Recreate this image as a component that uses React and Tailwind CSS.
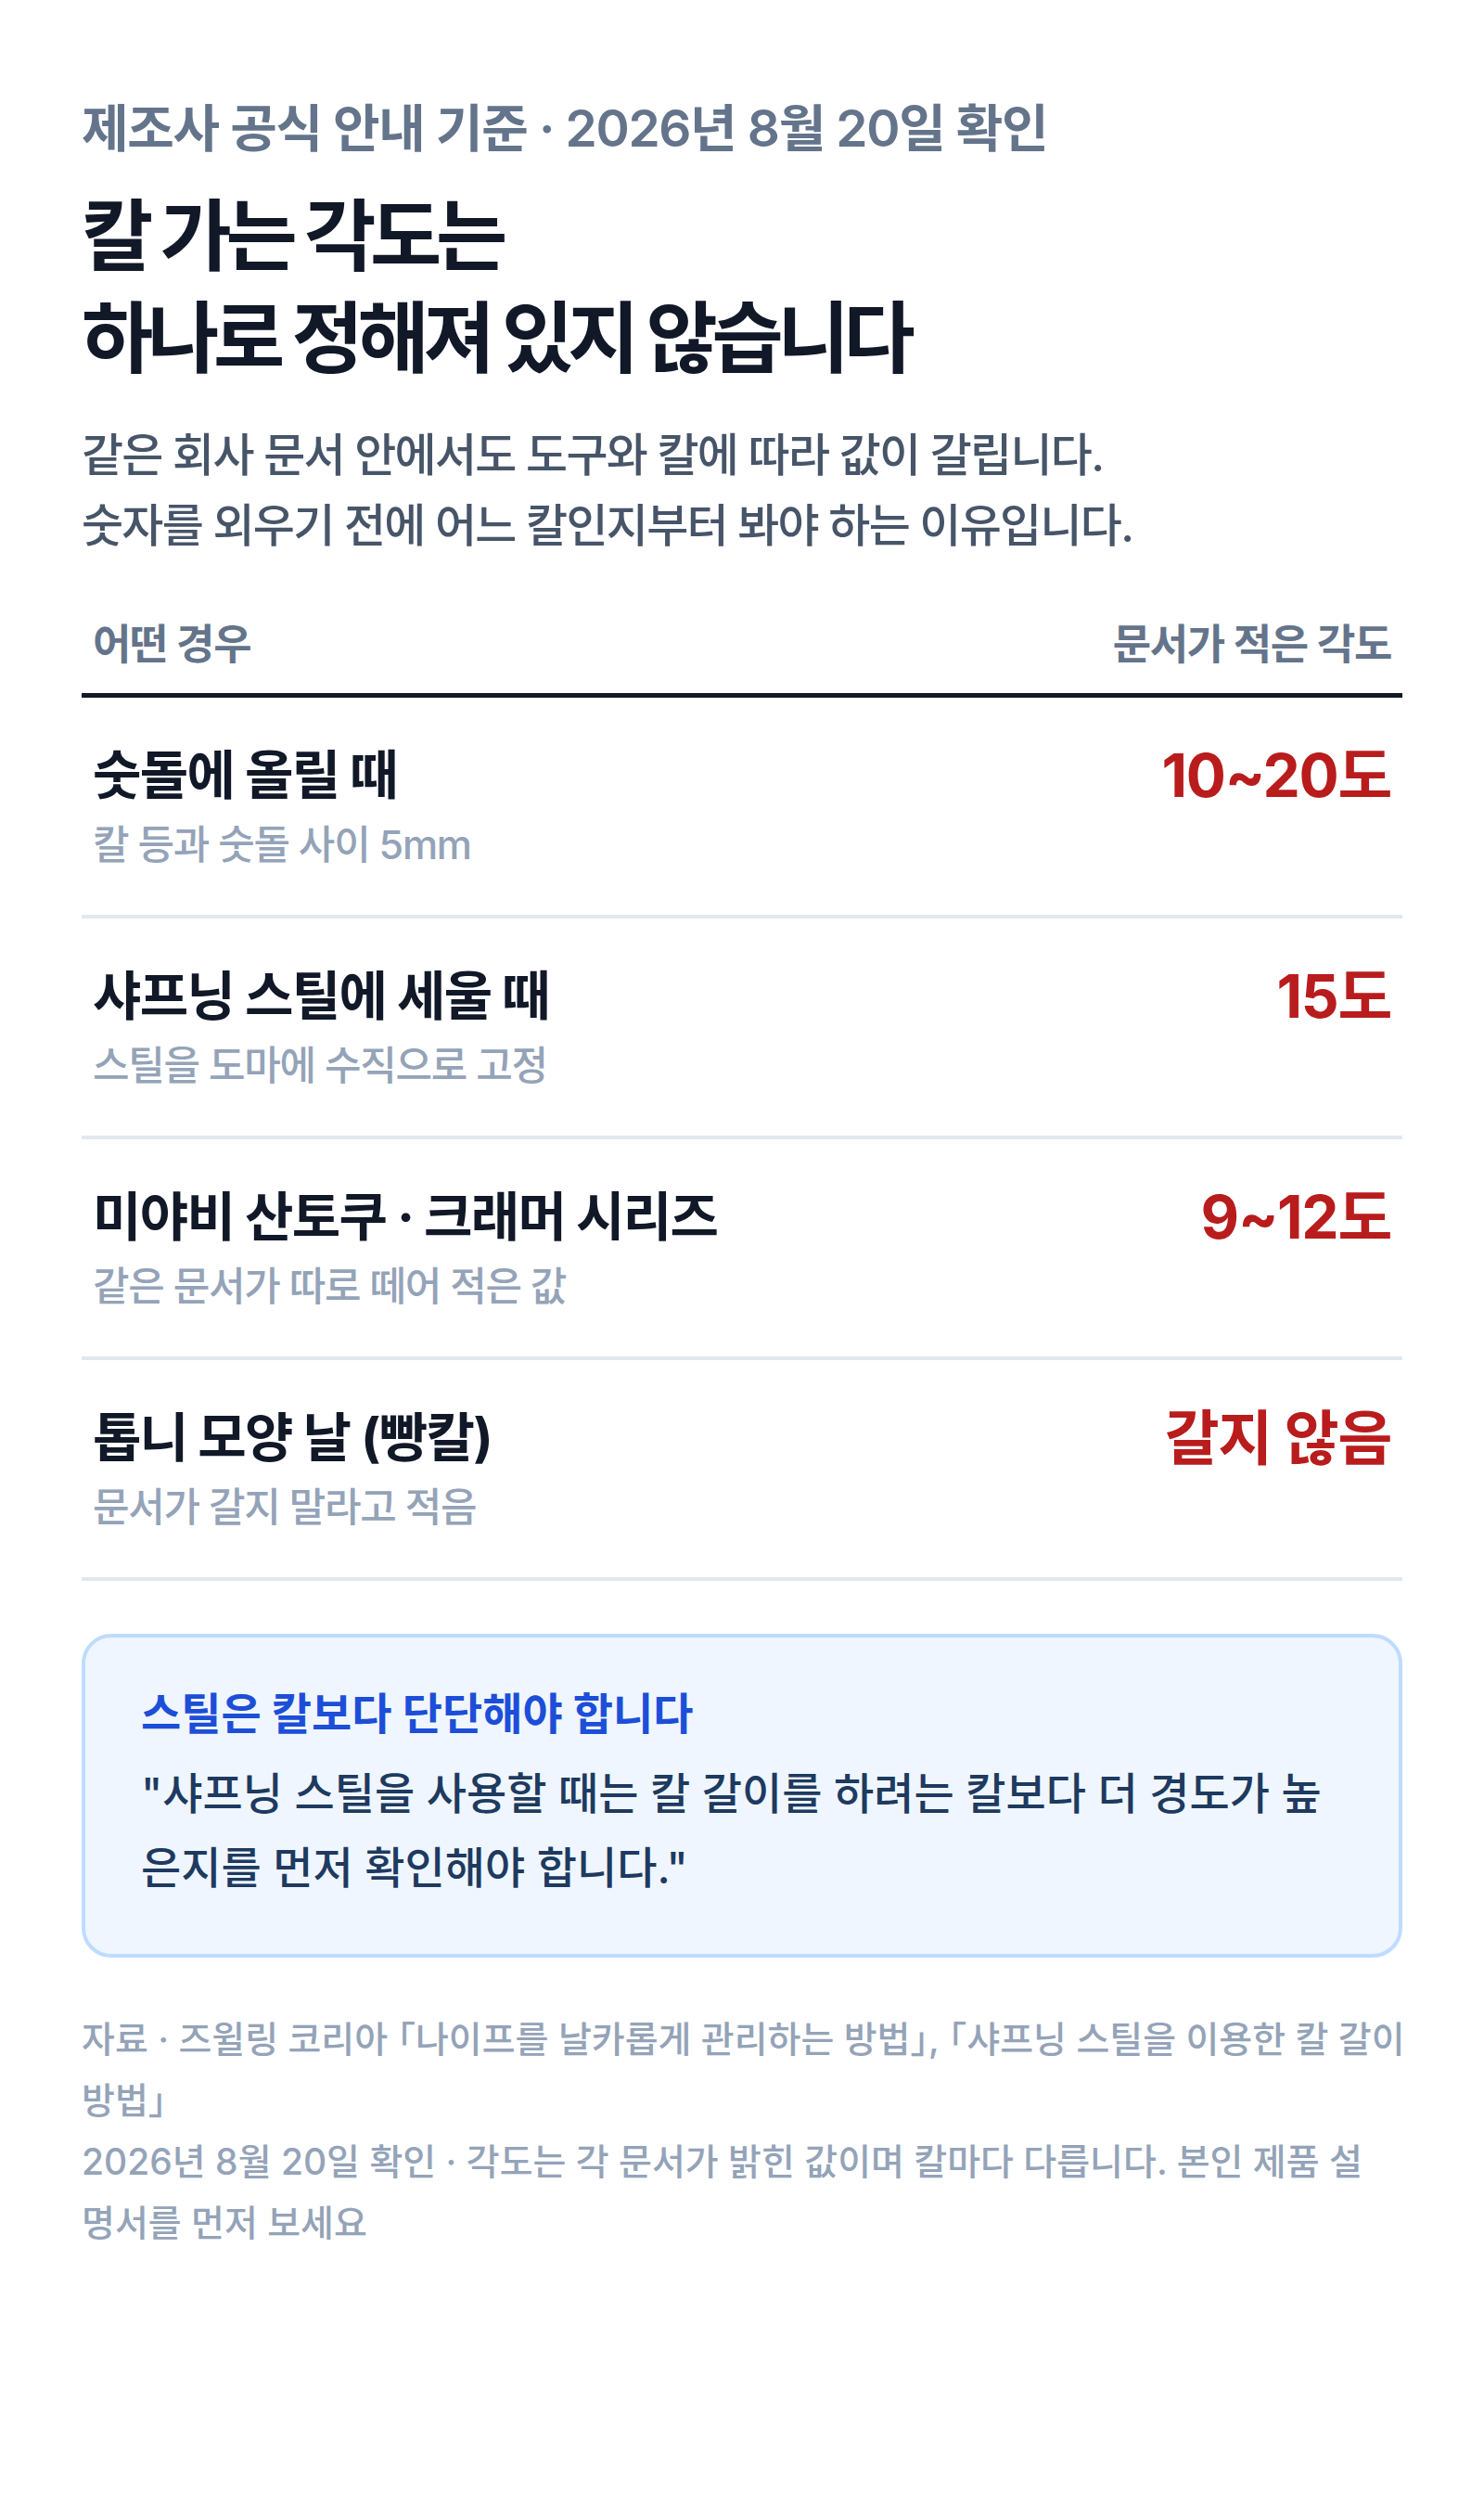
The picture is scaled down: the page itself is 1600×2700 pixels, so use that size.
const rows = [
  { title: "숫돌에 올릴 때", note: "칼 등과 숫돌 사이 5mm", angle: "10~20도" },
  { title: "샤프닝 스틸에 세울 때", note: "스틸을 도마에 수직으로 고정", angle: "15도" },
  { title: "미야비 산토쿠 · 크래머 시리즈", note: "같은 문서가 따로 떼어 적은 값", angle: "9~12도" },
  { title: "톱니 모양 날 (빵칼)", note: "문서가 갈지 말라고 적음", angle: "갈지 않음" },
];

// corner brackets use half-width alternates
const Open = () => <span className="[font-feature-settings:'halt']">「</span>;
const Close = () => <span className="[font-feature-settings:'halt']">」</span>;

function AngleRow({ title, note, angle }) {
  return (
    <div className="flex items-start justify-between border-b-4 border-[#e2e8f0] px-3 pt-[52px] pb-[48px]">
      <div>
        <div className="text-[57px] font-bold leading-[64px] tracking-[-0.03em] text-[#111827]">
          {title}
        </div>
        <div className="mt-[14px] text-[43px] font-medium leading-[56px] tracking-[-0.03em] text-[#94a3b8]">
          {note}
        </div>
      </div>
      <div className="text-[64px] font-bold leading-[64px] tracking-[-0.02em] text-[#b91c1c]">
        {angle}
      </div>
    </div>
  );
}

export default function App() {
  return (
    <div className="min-h-screen bg-white font-['Inter','Noto_Sans_CJK_KR',sans-serif]">
      <div className="px-[88px] pt-[103px] pb-[120px]">
        <p className="text-[55px] font-semibold leading-[70px] tracking-[-0.025em] text-[#64748b]">
          제조사 공식 안내 기준 · 2026년 8월 20일 확인
        </p>

        <h1 className="mt-[27px] text-[84px] font-bold leading-[110px] tracking-[-0.075em] text-[#111827]">
          칼 가는 각도는
          <br />
          하나로 정해져 있지 않습니다
        </h1>

        <p className="mt-[33px] text-[49px] font-medium leading-[76px] tracking-[-0.035em] text-[#475569]">
          같은 회사 문서 안에서도 도구와 칼에 따라 값이 갈립니다.
          <br />
          숫자를 외우기 전에 어느 칼인지부터 봐야 하는 이유입니다.
        </p>

        <div className="mt-[60px]">
          <div className="flex justify-between border-b-[5px] border-[#111827] px-3 pb-[22px] text-[45px] font-semibold leading-[60px] tracking-[-0.03em] text-[#64748b]">
            <span>어떤 경우</span>
            <span>문서가 적은 각도</span>
          </div>
          {rows.map((row) => (
            <AngleRow key={row.title} {...row} />
          ))}
        </div>

        <div className="mt-[57px] rounded-[32px] border-4 border-[#bfdbfe] bg-[#eff6ff] px-[60px] pt-[50px] pb-[53px]">
          <div className="text-[47px] font-bold leading-[64px] text-[#1d4ed8]">
            스틸은 칼보다 단단해야 합니다
          </div>
          <p className="mt-[14px] text-[47px] font-medium leading-[80px] text-[#1e3a5f]">
            "샤프닝 스틸을 사용할 때는 칼 갈이를 하려는 칼보다 더 경도가 높은지를 먼저 확인해야 합니다."
          </p>
        </div>

        <div className="mt-[55px] whitespace-nowrap text-[39px] font-medium leading-[66px] text-[#94a3b8]">
          <p>
            자료 · 즈윌링 코리아 <Open />나이프를 날카롭게 관리하는 방법<Close />, <Open />샤프닝 스틸을 이용한 칼 갈이
            <br />
            방법<Close />
          </p>
          <p>
            2026년 8월 20일 확인 · 각도는 각 문서가 밝힌 값이며 칼마다 다릅니다. 본인 제품 설
            <br />
            명서를 먼저 보세요
          </p>
        </div>
      </div>
    </div>
  );
}
